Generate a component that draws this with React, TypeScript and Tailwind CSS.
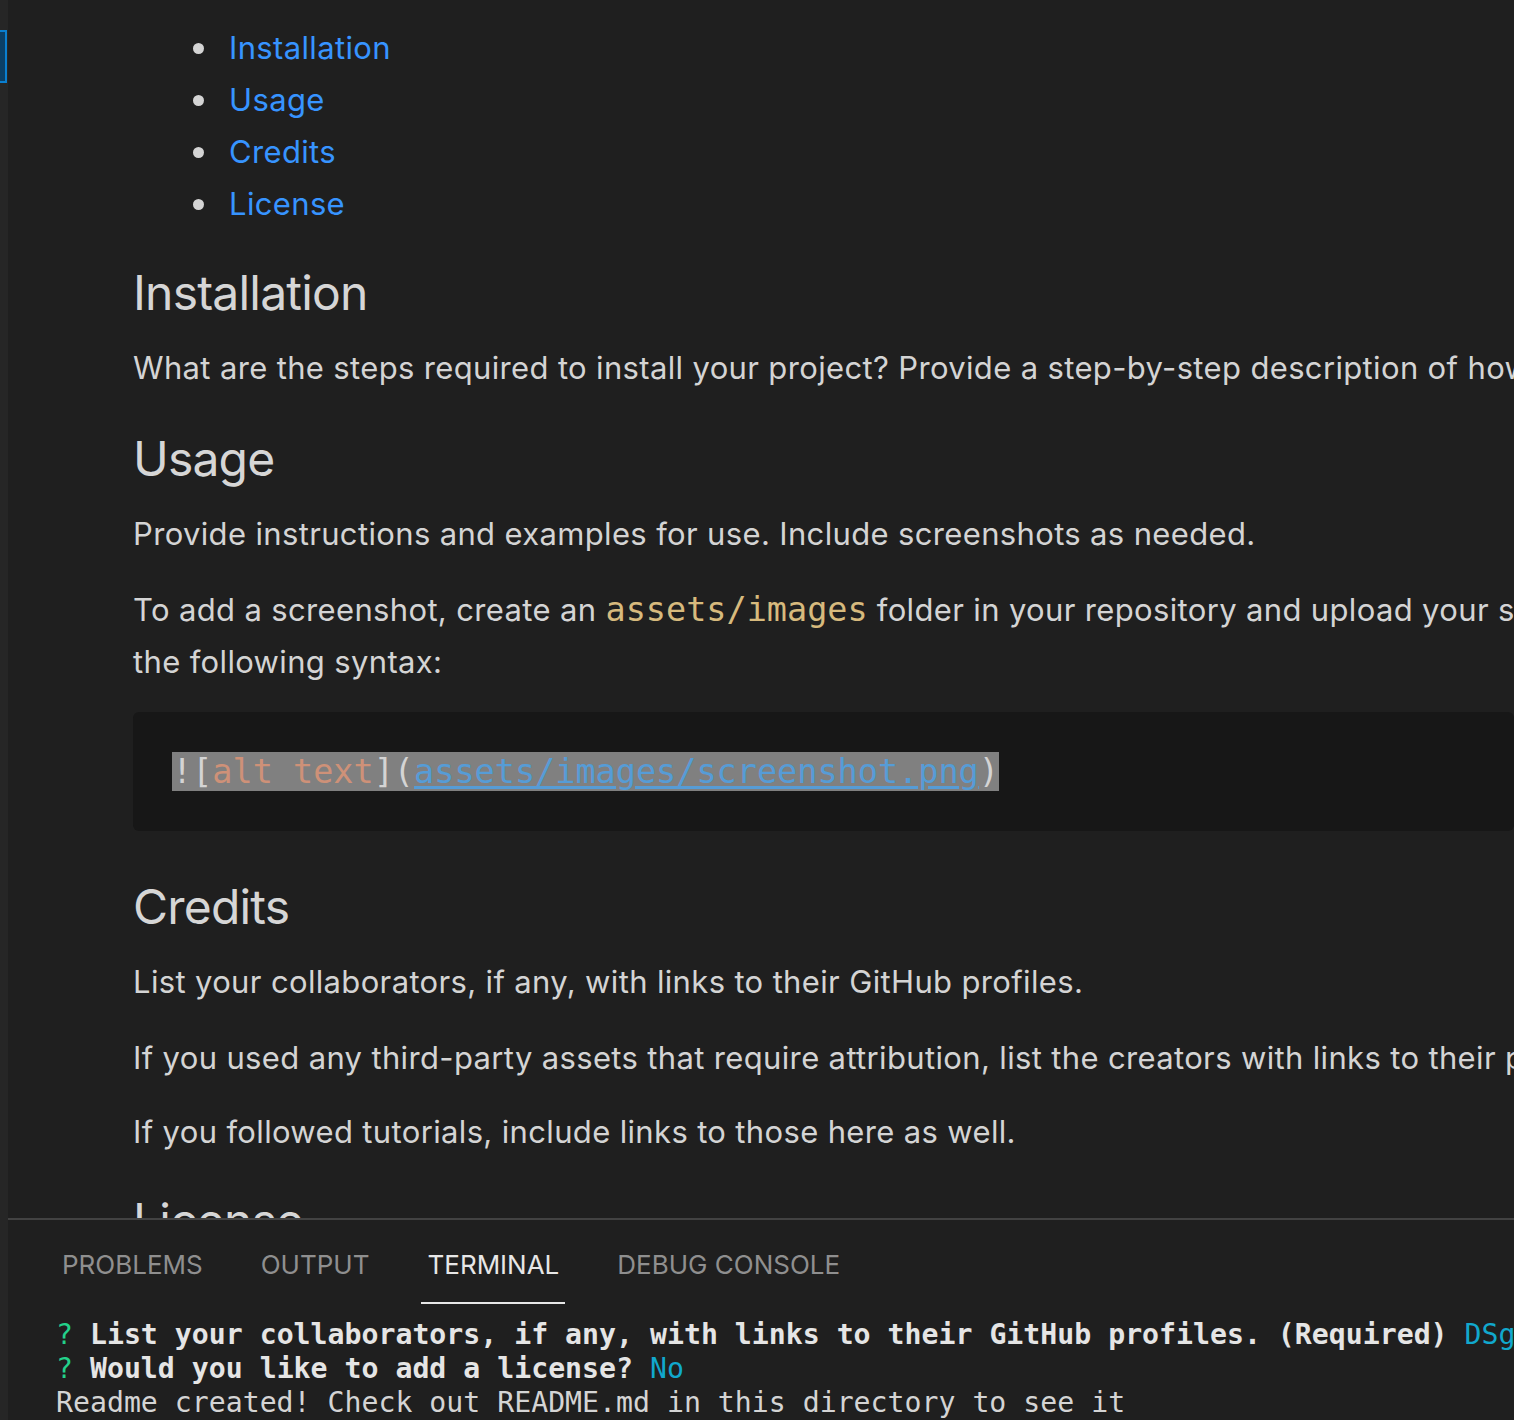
import React from 'react';

const sans = "font-['Inter','Noto_Sans',sans-serif]";
const mono = "font-['DejaVu_Sans_Mono','Liberation_Mono',monospace]";

const tocItems = ['Installation', 'Usage', 'Credits', 'License'];

const Heading: React.FC<{ children: React.ReactNode; className?: string }> = ({ children, className = '' }) => (
  <h2 className={`text-[48px] leading-[60px] tracking-[-0.8px] font-normal text-[#d6d6d6] whitespace-nowrap ${className}`}>{children}</h2>
);

const Para: React.FC<{ children: React.ReactNode; className?: string }> = ({ children, className = '' }) => (
  <p className={`text-[31px] leading-[52px] tracking-[0.35px] text-[#d4d4d4] whitespace-nowrap ${className}`}>{children}</p>
);

const tabs = [
  { label: 'PROBLEMS', active: false },
  { label: 'OUTPUT', active: false },
  { label: 'TERMINAL', active: true },
  { label: 'DEBUG CONSOLE', active: false },
];

const App: React.FC = () => {
  return (
    <div className={`w-[1514px] h-[1420px] flex bg-[#1f1f1f] overflow-hidden ${sans}`}>
      {/* left gutter */}
      <div className="w-[8px] shrink-0 bg-[#262626] pt-[30px]">
        <div className="h-[53px] w-[7px] bg-[#0b3f66] border-2 border-l-0 border-[#0a7fd0]" />
      </div>

      <div className="flex-1 flex flex-col min-w-0">
        {/* markdown preview */}
        <div className="h-[1220px] overflow-hidden pl-[125px] pt-[22px]">
          <ul>
            {tocItems.map(item => (
              <li key={item} className="flex items-center h-[52px] pl-[60px]">
                <span className="w-[11px] h-[11px] rounded-full bg-[#d4d4d4] mr-[25px]" />
                <span className="text-[31px] tracking-[0.35px] text-[#3794ff]">{item}</span>
              </li>
            ))}
          </ul>

          <Heading className="mt-[33px]">Installation</Heading>
          <Para className="mt-[19px]">
            What are the steps required to install your project? Provide a step-by-step description of how to get the development environment running.
          </Para>

          <Heading className="mt-[35px]">Usage</Heading>
          <Para className="mt-[19px]">Provide instructions and examples for use. Include screenshots as needed.</Para>
          <Para className="mt-[24px]">
            To add a screenshot, create an{' '}
            <code className={`${mono} text-[33.5px] tracking-normal text-[#d7ba7d]`}>assets/images</code> folder in your repository and upload your screenshot to it. Then, using the relative filepath, add it to your README using
            <br />
            the following syntax:
          </Para>

          <pre className={`mt-[24px] h-[119px] rounded-[6px] bg-[#171717] pl-[39px] pt-[39px] ${mono} text-[33.5px] leading-[42px]`}>
            <span className="bg-[#808080] text-[#d4d4d4]">
              ![<span className="text-[#ce9178]">alt text</span>](
              <span className="text-[#569cd6] underline underline-offset-[3px]">assets/images/screenshot.png</span>)
            </span>
          </pre>

          <Heading className="mt-[46px]">Credits</Heading>
          <Para className="mt-[19px]">List your collaborators, if any, with links to their GitHub profiles.</Para>
          <Para className="mt-[24px]">
            If you used any third-party assets that require attribution, list the creators with links to their primary web presence in this section.
          </Para>
          <Para className="mt-[22px]">If you followed tutorials, include links to those here as well.</Para>

          <Heading className="mt-[33px]">License</Heading>
        </div>

        {/* bottom panel */}
        <div className="flex-1 border-t-2 border-[#424242] bg-[#1f1f1f]">
          <div className="flex gap-[46px] pl-[48px] pt-[26px]">
            {tabs.map(tab => (
              <div
                key={tab.label}
                className={`px-[6px] h-[58px] text-[26px] leading-[38px] border-b-2 ${
                  tab.active ? 'text-[#e7e7e7] border-[#e7e7e7]' : 'text-[#8f8f8f] border-transparent'
                }`}
              >
                {tab.label}
              </div>
            ))}
          </div>
          <div className={`${mono} text-[28.2px] leading-[34px] pl-[48px] pt-[14px] text-[#d4d4d4] whitespace-nowrap`}>
            <div>
              <span className="text-[#23d18b]">? </span>
              <span className="font-bold text-[#e5e5e5]">List your collaborators, if any, with links to their GitHub profiles. (Required) </span>
              <span className="text-[#11a8cd]">DSgenius</span>
            </div>
            <div>
              <span className="text-[#23d18b]">? </span>
              <span className="font-bold text-[#e5e5e5]">Would you like to add a license? </span>
              <span className="text-[#11a8cd]">No</span>
            </div>
            <div>Readme created! Check out README.md in this directory to see it</div>
          </div>
        </div>
      </div>
    </div>
  );
};

export default App;
